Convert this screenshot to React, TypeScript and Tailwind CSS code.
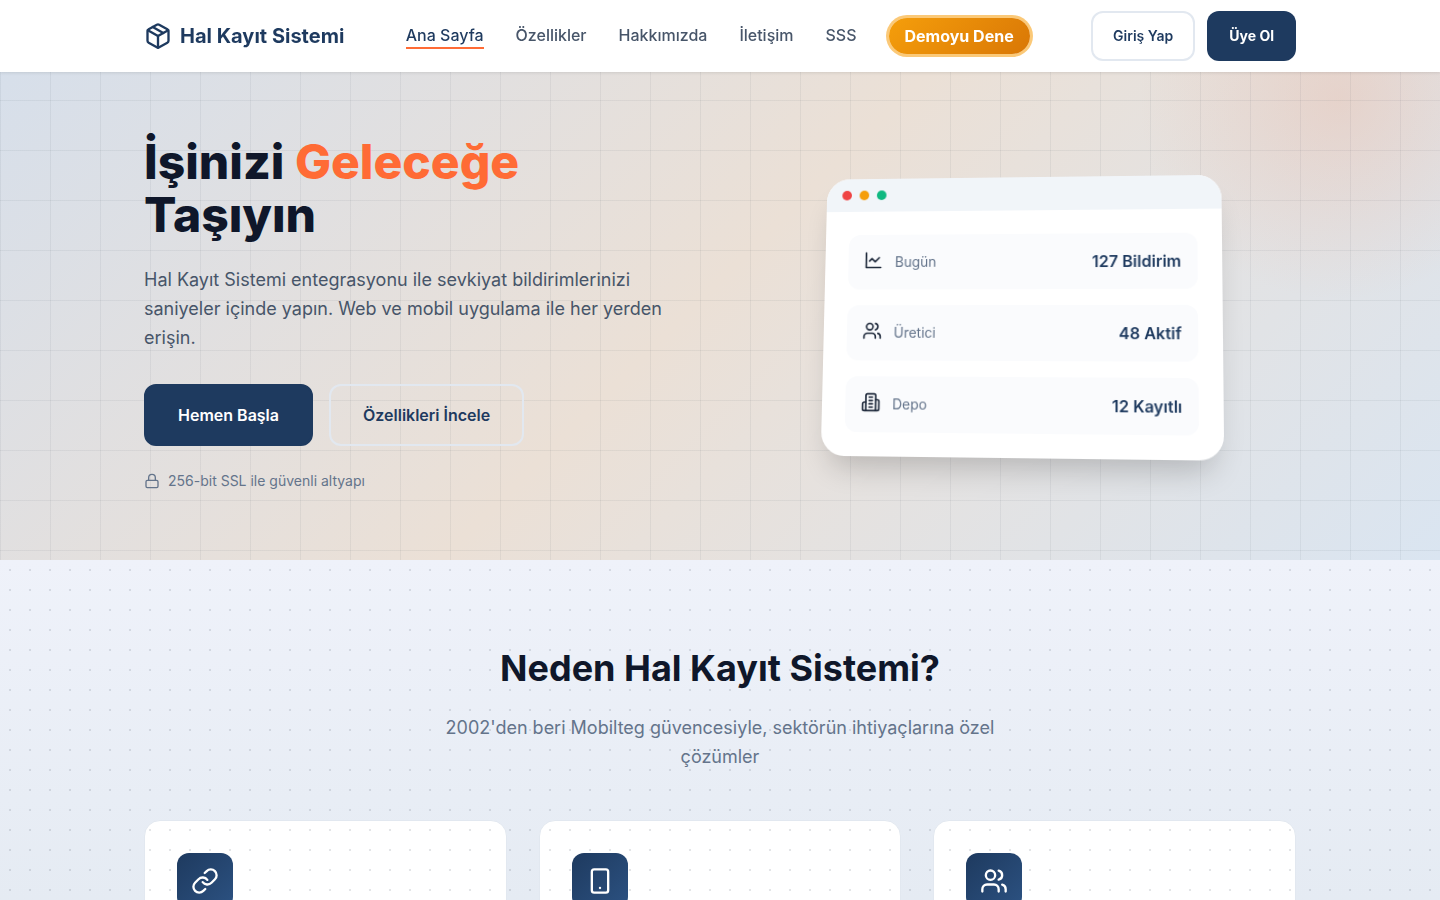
import React from 'react';
import { Link, Lock, Package, Smartphone, Users } from 'lucide-react';

const navItems = ['Özellikler', 'Hakkımızda', 'İletişim', 'SSS'];

const StatIcon: React.FC<{ children: React.ReactNode }> = ({ children }) => (
    <svg width="20" height="20" viewBox="0 0 24 24" fill="none" stroke="currentColor" strokeWidth="2" strokeLinecap="round" strokeLinejoin="round" aria-hidden="true">
        {children}
    </svg>
);

const LineChart: React.FC = () => (
    <StatIcon>
        <path d="M3 3v18h18" />
        <path d="m19 9-5 5-4-4-3 3" />
    </StatIcon>
);

const Depot: React.FC = () => (
    <StatIcon>
        <path d="M6 22V4a2 2 0 0 1 2-2h8a2 2 0 0 1 2 2v18Z" />
        <path d="M6 12H4a2 2 0 0 0-2 2v6a2 2 0 0 0 2 2h2" />
        <path d="M18 9h2a2 2 0 0 1 2 2v9a2 2 0 0 1-2 2h-2" />
        <path d="M10 6h4" />
        <path d="M10 10h4" />
        <path d="M10 14h4" />
        <path d="M10 18h4" />
    </StatIcon>
);

const stats = [
    { icon: <LineChart />, label: 'Bugün', value: '127 Bildirim' },
    { icon: <Users size={20} />, label: 'Üretici', value: '48 Aktif' },
    { icon: <Depot />, label: 'Depo', value: '12 Kayıtlı' },
];

const Header: React.FC = () => (
    <header className="fixed inset-x-0 top-0 z-50 bg-white shadow-[0_1px_3px_rgba(0,0,0,0.1)]">
        <div className="mx-auto flex h-[72px] max-w-[1200px] items-center justify-between px-6">
            <a href="#" className="flex items-center gap-2 text-xl font-bold text-[#1e3a5f]">
                <Package size={28} />
                Hal Kayıt Sistemi
            </a>
            <nav className="flex items-center gap-8 text-base font-medium text-[#475569]">
                <a href="#" className="border-b-2 border-[#ff6b35] text-[#1e3a5f]">Ana Sayfa</a>
                {navItems.map((item) => (
                    <a key={item} href="#" className="border-b-2 border-transparent">{item}</a>
                ))}
                <a href="#" className="rounded-full bg-linear-135 from-[#f59e0b] to-[#d97706] px-4 py-1.5 font-bold text-white ring-3 ring-[#fbc978]">
                    Demoyu Dene
                </a>
            </nav>
            <div className="flex items-center gap-3">
                <button type="button" className="h-[50px] rounded-xl border-2 border-[#e2e8f0] px-5 text-sm font-semibold text-[#1e3a5f]">
                    Giriş Yap
                </button>
                <button type="button" className="h-[50px] rounded-xl bg-[#1e3a5f] px-[22px] text-sm font-bold text-white">
                    Üye Ol
                </button>
            </div>
        </div>
    </header>
);

const PreviewWindow: React.FC = () => (
    <div className="w-[400px] overflow-hidden rounded-3xl bg-white shadow-[0_20px_30px_-10px_rgba(0,0,0,0.2)] transform-[perspective(1000px)_rotateY(-5deg)_rotateX(5deg)]">
        <div className="flex gap-2 bg-[#f1f5f9] px-4 py-3">
            <span className="size-2.5 rounded-full bg-[#ef4444]" />
            <span className="size-2.5 rounded-full bg-[#f59e0b]" />
            <span className="size-2.5 rounded-full bg-[#10b981]" />
        </div>
        <div className="flex flex-col gap-4 p-6">
            {stats.map((stat) => (
                <div key={stat.label} className="flex h-14 items-center gap-3 rounded-xl bg-[#fafbfd] px-4">
                    <span className="pb-1 text-[#1e293b]">{stat.icon}</span>
                    <span className="text-sm text-[#64748b]">{stat.label}</span>
                    <span className="ml-auto font-semibold text-[#1e3a5f]">{stat.value}</span>
                </div>
            ))}
        </div>
    </div>
);

const Hero: React.FC = () => (
    <section className="relative bg-linear-135 from-[#d5dfec] via-[#ebe0d6] to-[#dae5f1] pt-[135px] pb-16">
        <div className="absolute inset-0 bg-[radial-gradient(circle_at_93%_100px,rgba(235,175,150,0.3),transparent_200px)]" />
        <div className="absolute inset-0 bg-[linear-gradient(rgba(30,41,59,0.06)_1px,transparent_1px),linear-gradient(90deg,rgba(30,41,59,0.06)_1px,transparent_1px)] bg-size-[50px_50px]" />
        <div className="relative mx-auto grid max-w-[1200px] grid-cols-2 items-center gap-12 px-6">
            <div className="pb-1">
                <h1 className="mb-6 text-5xl leading-[53px] font-extrabold text-[#0f172a]">
                    İşinizi <span className="text-[#ff6b35]">Geleceğe</span>
                    <br />
                    Taşıyın
                </h1>
                <p className="mb-8 text-lg leading-[29px] text-[#475569]">
                    Hal Kayıt Sistemi entegrasyonu ile sevkiyat bildirimlerinizi saniyeler içinde yapın. Web ve mobil uygulama ile her yerden erişin.
                </p>
                <div className="mb-6 flex gap-4">
                    <button type="button" className="h-[62px] rounded-xl border-2 border-[#1e3a5f] bg-[#1e3a5f] px-8 font-semibold text-white">
                        Hemen Başla
                    </button>
                    <button type="button" className="h-[62px] rounded-xl border-2 border-[#e2e8f0] px-8 font-semibold text-[#1e3a5f]">
                        Özellikleri İncele
                    </button>
                </div>
                <div className="flex items-center gap-2 text-sm leading-[22px] text-[#64748b]">
                    <Lock size={16} />
                    256-bit SSL ile güvenli altyapı
                </div>
            </div>
            <div className="flex justify-center">
                <PreviewWindow />
            </div>
        </div>
    </section>
);

const Features: React.FC = () => (
    <section className="relative bg-linear-to-b from-[#eff2fa] to-[#dee6ee] py-20">
        <div className="mx-auto max-w-[1200px] px-6">
            <div className="mx-auto mb-[49px] max-w-[600px] text-center">
                <h2 className="mb-4 text-4xl leading-[57px] font-bold text-[#0f172a]">Neden Hal Kayıt Sistemi?</h2>
                <p className="text-lg leading-[29px] text-[#64748b]">
                    2002'den beri Mobilteg güvencesiyle, sektörün ihtiyaçlarına özel çözümler
                </p>
            </div>
            <div className="grid grid-cols-3 gap-8">
                {[Link, Smartphone, Users].map((Icon, i) => (
                    <div key={i} className="h-60 rounded-2xl border border-[#e2e8f0] bg-white p-8">
                        <div className="relative z-10 flex size-14 items-center justify-center rounded-xl bg-linear-135 from-[#1e3a5f] to-[#2c5282] text-white">
                            <Icon size={28} />
                        </div>
                    </div>
                ))}
            </div>
        </div>
        <div className="pointer-events-none absolute inset-0 bg-[radial-gradient(circle,rgba(30,41,59,0.12)_1px,transparent_1px)] bg-size-[20px_20px]" />
    </section>
);

export default function App() {
    return (
        <div className="font-[Inter,sans-serif]">
            <Header />
            <main>
                <Hero />
                <Features />
            </main>
        </div>
    );
}
